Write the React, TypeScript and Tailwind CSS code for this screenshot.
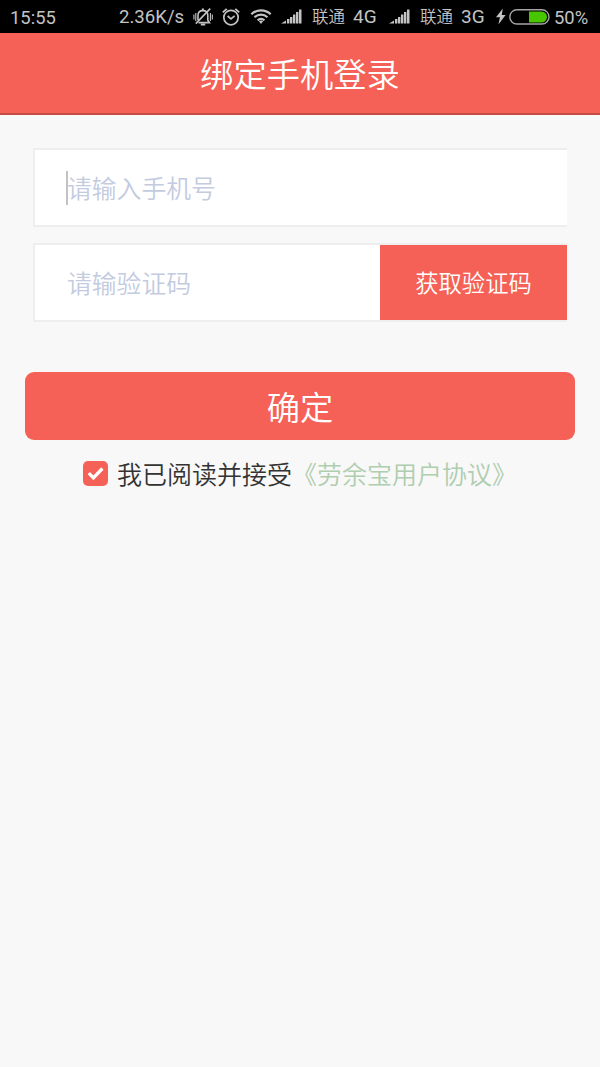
import { useState } from "react";

function MuteIcon() {
  return (
    <svg width="20" height="20" viewBox="0 0 20 20" fill="none" stroke="currentColor" strokeWidth="1.6" className="shrink-0">
      <path d="M5 13.2V8.6C5 5.4 6.9 3.6 9.8 3.6S14.8 5.4 14.8 8.6v4.6l1.6 2.4H5.5" />
      <path d="M9.9 1.4v2M7.8 17.6h4.4" strokeWidth="2" />
      <path d="M17.2 1.6L2.8 16.6" />
      <path d="M.9 7.4v5.2M2.8 6v8M19.3 7.4v5.2M17.4 6v8" strokeWidth="1.1" />
    </svg>
  );
}

function AlarmIcon() {
  return (
    <svg width="18" height="18" viewBox="0 0 18 18" fill="none" stroke="currentColor" strokeWidth="1.7" className="shrink-0">
      <circle cx="9" cy="9.6" r="7.2" />
      <path d="M5.6 8L9 10.9l3.6-3" />
      <path d="M.8 4.4L4.7.9M17.2 4.4L13.3.9" strokeWidth="1.9" />
    </svg>
  );
}

function WifiIcon() {
  return (
    <svg width="22" height="17" viewBox="0 0 22 17" fill="none" stroke="currentColor" strokeWidth="2.2" className="shrink-0">
      <path d="M1.3 6.2c5.5-5.2 13.9-5.2 19.4 0M4.5 9.3c3.8-3.5 9.2-3.5 13 0M7.6 12.3c2.1-1.8 4.7-1.8 6.8 0" />
      <path d="M8.9 13.3L11 16l2.1-2.7c-1.2-1-3-1-4.2 0z" fill="currentColor" stroke="none" />
    </svg>
  );
}

function SignalIcon() {
  return (
    <svg width="21" height="15" viewBox="0 0 21 15" fill="currentColor" className="shrink-0">
      <path d="M0 14.5L5 11.5v3zM6 10h2.4v4.5H6zM9 8h2.4v6.5H9zM12 5.5h2.4v9H12zM15 3h2.4v11.5H15zM18 .5h2.5v14H18z" />
    </svg>
  );
}

function BatteryIcon() {
  return (
    <svg width="41" height="16" viewBox="0 0 41 16" fill="none" className="shrink-0">
      <path d="M20 2.5h12.5a5.5 5.5 0 0 1 0 11H20z" fill="#48c600" />
      <rect x=".8" y=".8" width="39.2" height="14.2" rx="7.1" stroke="#a5a5a5" strokeWidth="1.4" />
    </svg>
  );
}

function StatusBar() {
  return (
    <div className="flex h-[33px] items-center bg-black pl-[10px] font-['Roboto','Noto_Sans_CJK_SC',sans-serif] text-[18.4px] font-normal whitespace-nowrap text-[#c3c3c3]">
      <span className="w-[109px] shrink-0 pt-[2px]">15:55</span>
      <span className="w-[74px] shrink-0 pt-[2px] text-[18.6px]">2.36K/s</span>
      <MuteIcon />
      <span className="ml-[9px]"><AlarmIcon /></span>
      <span className="ml-[10px]"><WifiIcon /></span>
      <span className="mr-[10px] ml-[9px]"><SignalIcon /></span>
      <span className="w-[41px] shrink-0 pt-[4px] text-[16.5px] font-[350]">联通</span>
      <span className="w-[36px] shrink-0 pt-[2px] text-[19px]">4G</span>
      <span className="mr-[10px]"><SignalIcon /></span>
      <span className="w-[41px] shrink-0 pt-[4px] text-[16.5px] font-[350]">联通</span>
      <span className="w-[35px] shrink-0 pt-[2px] text-[19px]">3G</span>
      <svg width="10" height="17" viewBox="0 0 10 17" fill="currentColor" className="mr-[3px] shrink-0">
        <path d="M6.8.5L0 9.3h4L2.4 16.5 9.6 7H5.8z" />
      </svg>
      <BatteryIcon />
      <span className="ml-[4px] pt-[2px]">50%</span>
    </div>
  );
}

export default function App() {
  const [phone, setPhone] = useState("");
  const [code, setCode] = useState("");
  const [agreed, setAgreed] = useState(true);

  return (
    <div className="min-h-[1067px] w-[600px] bg-[#f8f8f8] font-['Noto_Sans_CJK_SC',sans-serif] font-[350]">
      <StatusBar />
      <header className="flex h-[82px] items-center justify-center border-b-2 border-[#c34c44] bg-[#f56156]">
        <h1 className="text-[33.3px] leading-none font-[350] text-white">绑定手机登录</h1>
      </header>

      <form className="pt-[33px]" onSubmit={(e) => e.preventDefault()}>
        <div className="mx-[33px] flex h-[79px] items-center border-y-2 border-l-2 border-[#eeeeee] bg-white pl-[31px]">
          <span className="h-[34px] w-[2px] shrink-0 bg-[#c2c2c2]" />
          <input
            value={phone}
            onChange={(e) => setPhone(e.target.value)}
            placeholder="请输入手机号"
            className="-ml-px h-full min-w-0 flex-1 pb-[2px] text-[24.8px] outline-none placeholder:text-[#c3cbdf]"
          />
        </div>

        <div className="mx-[33px] mt-4 flex h-[79px] border-y-2 border-l-2 border-[#eeeeee] bg-white">
          <input
            value={code}
            onChange={(e) => setCode(e.target.value)}
            placeholder="请输验证码"
            className="min-w-0 flex-1 pl-[32px] text-[24.8px] outline-none placeholder:text-[#c3cbdf]"
          />
          <button type="button" className="w-[187px] bg-[#f56156] text-[23.3px] text-white">
            获取验证码
          </button>
        </div>

        <button
          type="submit"
          className="mx-[25px] mt-[50px] flex h-[68px] w-[550px] items-center justify-center rounded-[9px] bg-[#f56156] text-[33.3px] leading-none text-white"
        >
          确定
        </button>
      </form>

      <div className="mt-[20px] flex h-[27px] items-center pl-[83px] text-[25px] leading-none whitespace-nowrap">
        <button
          type="button"
          aria-label="接受协议"
          onClick={() => setAgreed(!agreed)}
          className="mr-[9px] flex h-[25px] w-[25px] shrink-0 items-center justify-center rounded-[5px] bg-[#f56156]"
        >
          {agreed && (
            <svg width="25" height="25" viewBox="0 0 25 25" fill="none" stroke="white" strokeWidth="3.3">
              <path d="M5.8 12.2l4.6 4.6 9-9.3" />
            </svg>
          )}
        </button>
        <span className="text-[#333]">我已阅读并接受</span>
        <span className="text-[#afcdaf]">《劳余宝用户协议》</span>
      </div>
    </div>
  );
}
